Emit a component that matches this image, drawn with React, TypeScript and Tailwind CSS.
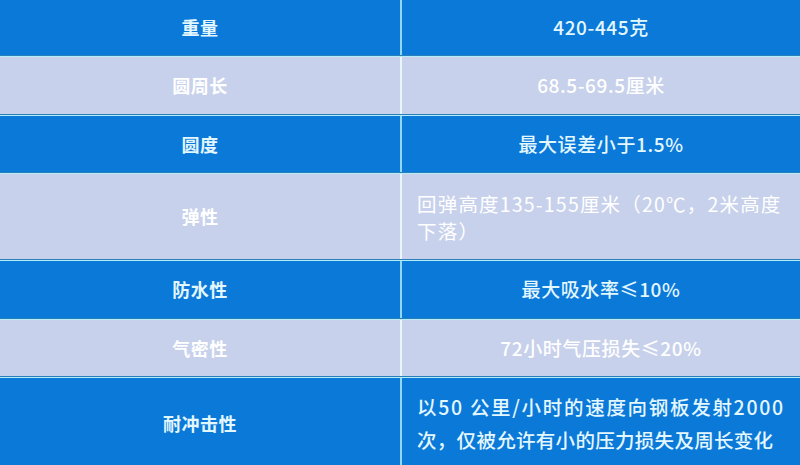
import React from "react";

type Row = { k: string; v: string[]; blue: boolean; h: string; multi?: boolean; big?: boolean };

const rows: Row[] = [
  { k: "重量", v: ["420-445克"], blue: true, h: "h-[55px]" },
  { k: "圆周长", v: ["68.5-69.5厘米"], blue: false, h: "h-[57px]" },
  { k: "圆度", v: ["最大误差小于1.5%"], blue: true, h: "h-[56px]" },
  { k: "弹性", v: ["回弹高度135-155厘米（20℃，2米高度", "下落）"], blue: false, h: "h-[85px]", multi: true },
  { k: "防水性", v: ["最大吸水率≤10%"], blue: true, h: "h-[57px]" },
  { k: "气密性", v: ["72小时气压损失≤20%"], blue: false, h: "h-[56px]" },
  { k: "耐冲击性", v: ["以50 公里/小时的速度向钢板发射2000", "次，仅被允许有小的压力损失及周长变化"], blue: true, h: "h-[90px]", multi: true, big: true },
];

export default function App() {
  return (
    <div
      className="w-[800px] h-[465px] overflow-hidden bg-[#0b79d8] flex flex-col"
      style={{ fontFamily: '"Noto Sans CJK SC", "Noto Sans", sans-serif' }}
    >
      {rows.map((r, i) => (
        <React.Fragment key={i}>
          {i > 0 && (
            <div className="h-[2px] flex flex-col shrink-0">
              <div className="h-[1px] bg-[#2a7fb8]" />
              <div className="h-[1px] bg-[#b4ecf8]" />
            </div>
          )}
          <div
            className={`${r.h} shrink-0 grid grid-cols-[400px_2px_1fr] ${
              r.blue ? "bg-[#0b79d8] text-[#e3f7ff]" : "bg-[#c7d1eb] text-white"
            }`}
          >
            <div className="flex items-center justify-center text-[18px] font-bold tracking-[0.5px]">
              {r.k}
            </div>
            <div className={r.blue ? "bg-[#8fd8f0]" : "bg-[#eaf6fb]"} />
            {r.multi ? (
              r.big ? (
                <div className="flex flex-col justify-center pl-[15px] text-[19.5px] leading-[33px] font-medium">
                  <div className="whitespace-nowrap tracking-[1.7px]">{r.v[0]}</div>
                  <div className="whitespace-nowrap tracking-[0.3px]">{r.v[1]}</div>
                </div>
              ) : (
                <div className="flex flex-col justify-center pl-[15px] text-[19.5px] leading-[27px] tracking-[1.2px]">
                  {r.v.map((l, j) => (
                    <div key={j} className="whitespace-nowrap">{l}</div>
                  ))}
                </div>
              )
            ) : (
              <div className="flex items-center justify-center text-[19px] font-medium tracking-[0.6px]">
                {r.v[0]}
              </div>
            )}
          </div>
        </React.Fragment>
      ))}
    </div>
  );
}
